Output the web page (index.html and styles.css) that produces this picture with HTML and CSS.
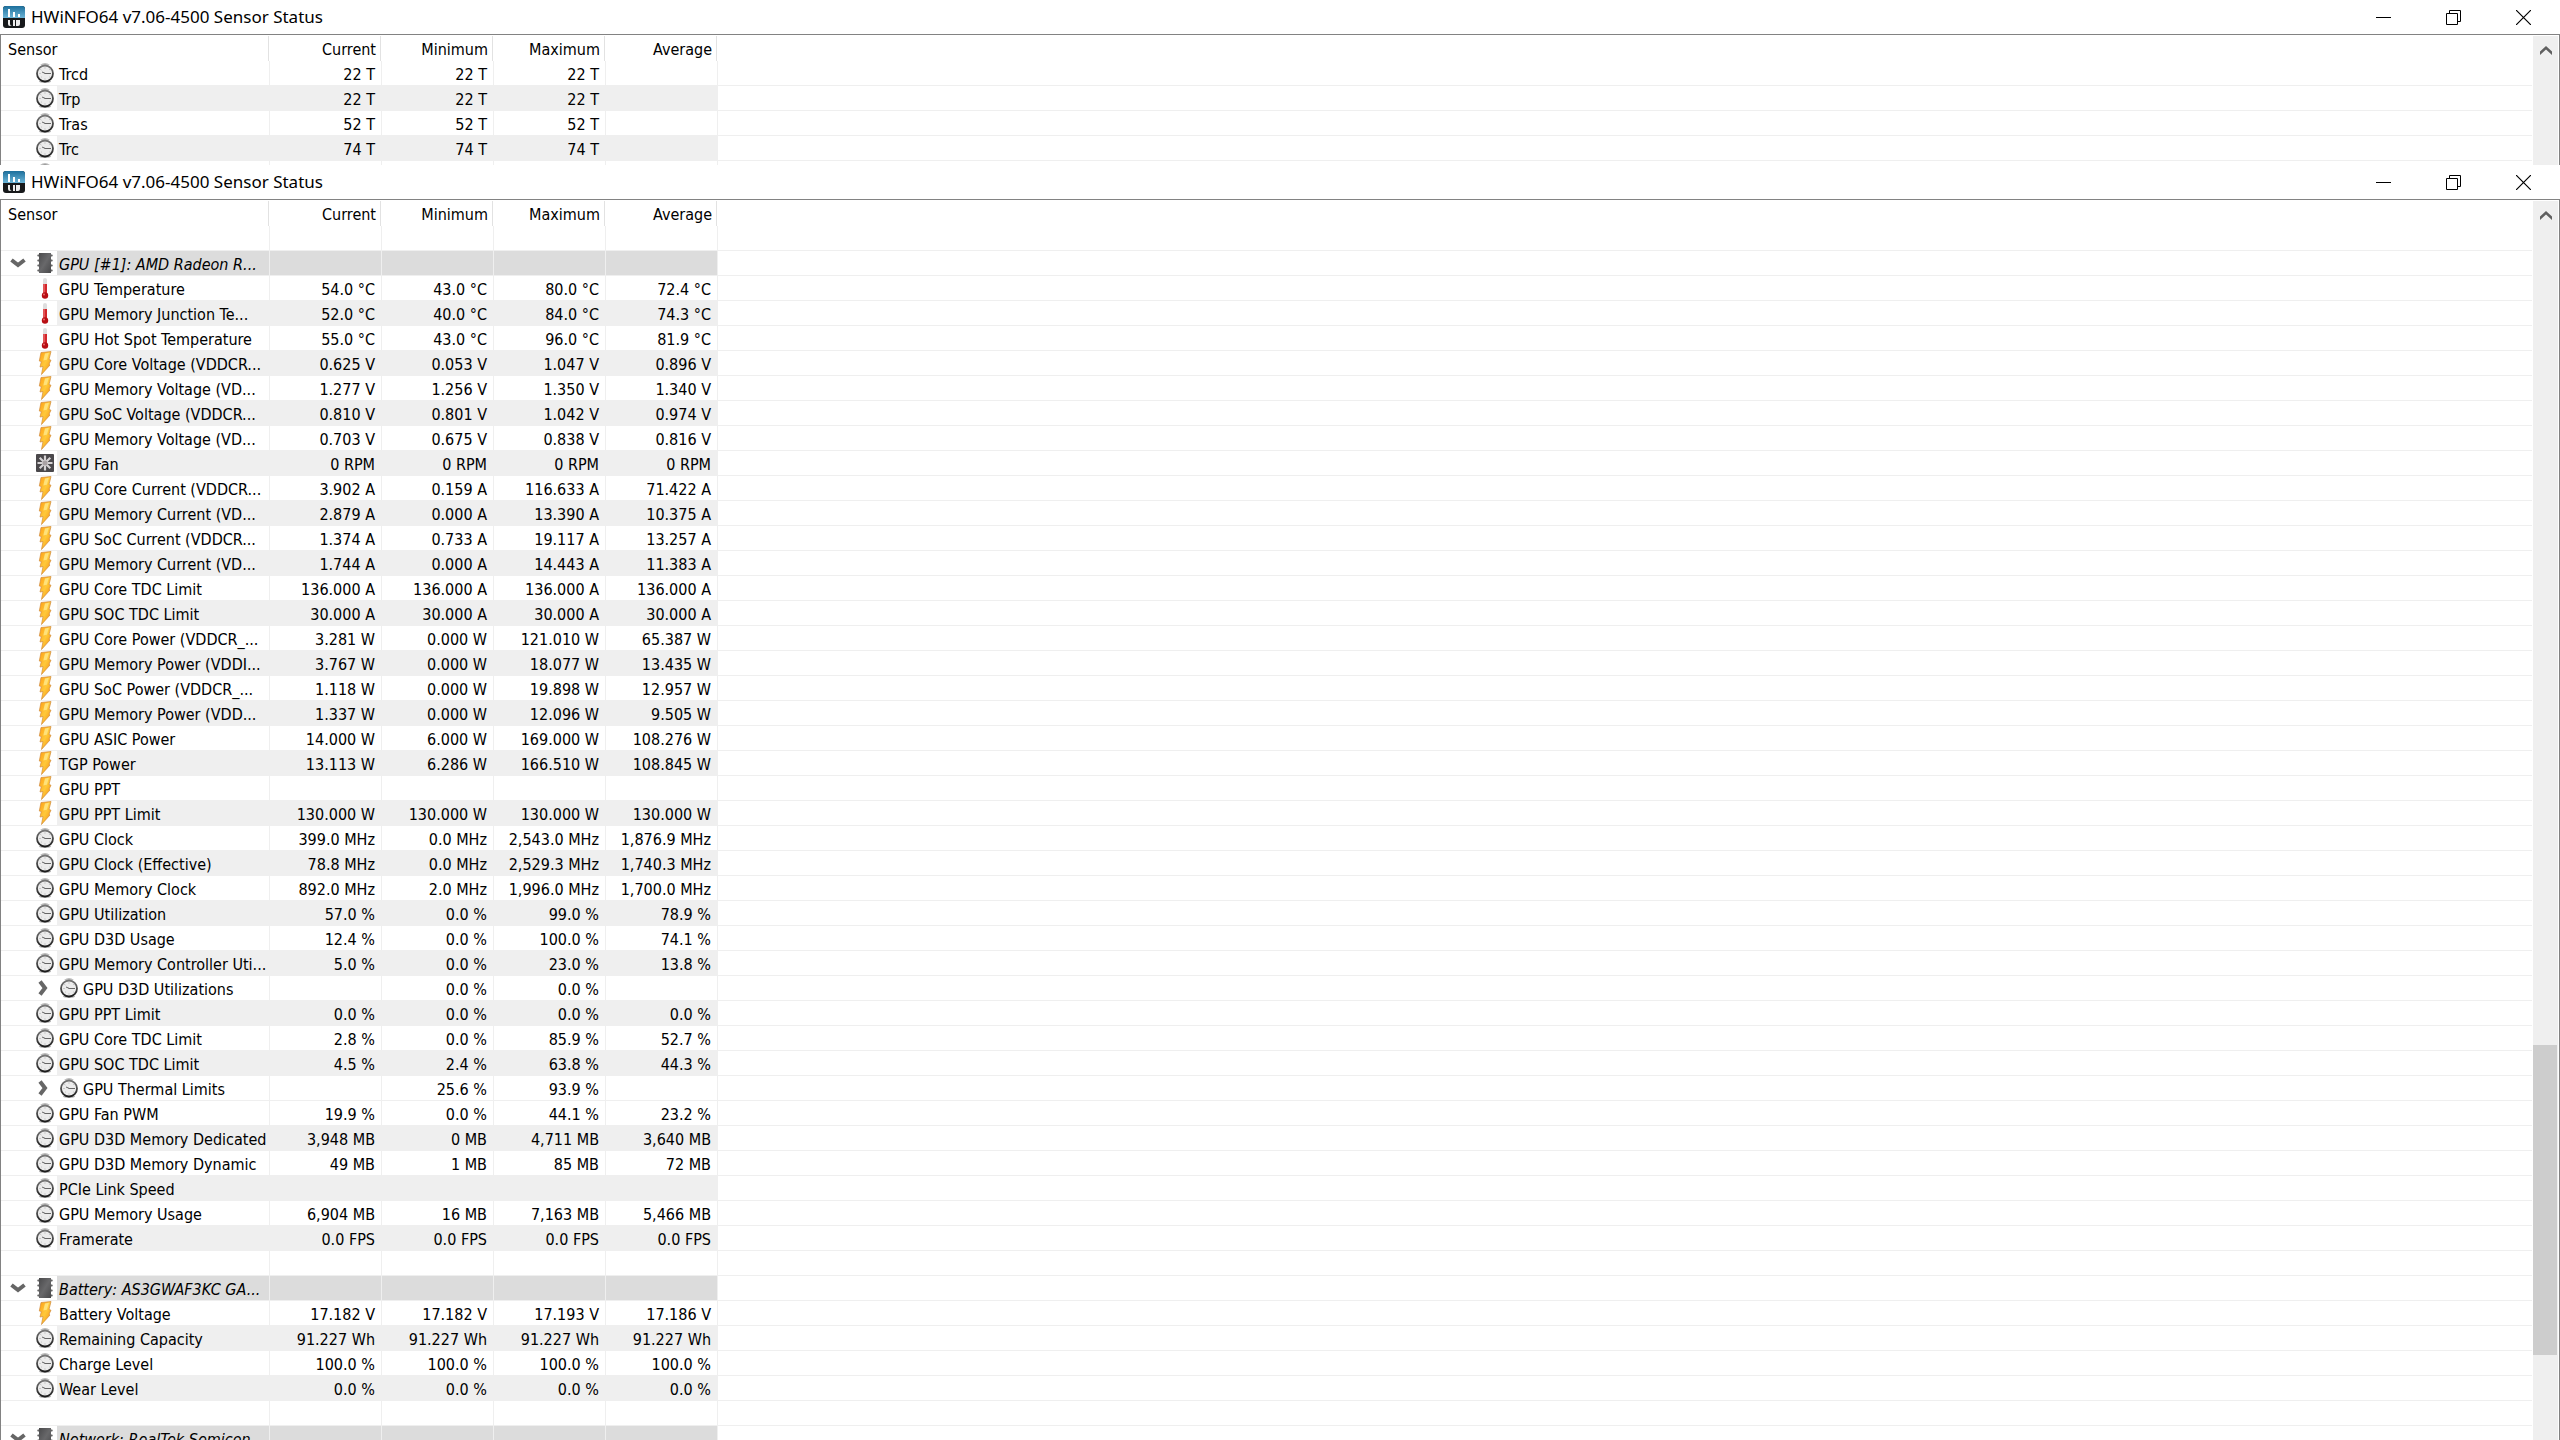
FILE: index.html
```html
<!doctype html>
<html lang="en">
<head>
<meta charset="utf-8">
<title>HWiNFO64 v7.06-4500 Sensor Status</title>
<link rel="stylesheet" href="styles.css">
</head>
<body>
<svg class="defs" aria-hidden="true">
  <defs>
    <linearGradient id="gLogo" x1="0" y1="0" x2="0" y2="1"><stop offset="0" stop-color="#1c6f9c"/><stop offset="1" stop-color="#6cb4d6"/></linearGradient>
    <linearGradient id="gBolt" x1="0" y1="0" x2="1" y2="1"><stop offset="0" stop-color="#ff9d14"/><stop offset=".5" stop-color="#ffc93a"/><stop offset="1" stop-color="#f58a08"/></linearGradient>
    <linearGradient id="gRim" x1="0" y1="0" x2="0" y2="1"><stop offset="0" stop-color="#777"/><stop offset="1" stop-color="#1c1c1c"/></linearGradient>
    <linearGradient id="gChip" x1="0" y1="0" x2="1" y2="1"><stop offset="0" stop-color="#4a4a4c"/><stop offset=".5" stop-color="#68686a"/><stop offset="1" stop-color="#48484a"/></linearGradient>
  </defs>
  <symbol id="logo" viewBox="0 0 22 22">
    <rect width="22" height="22" rx="3" fill="#17191b"/>
    <path d="M3 0h16a3 3 0 0 1 3 3v9H0V3a3 3 0 0 1 3-3z" fill="url(#gLogo)"/>
    <path d="M5 3h2v8H5zM10 6h2v5h-2zM15 8h2v3h-2z" fill="#fff"/>
    <path d="M5 14h2v4q0 2 2 2h1v-6h2v6h-5q-2 0-2-2zM15 14h2v4q0 2-2 2h-2v-6z" fill="#eee"/>
  </symbol>
  <symbol id="clock" viewBox="0 0 18 24">
    <path d="M4 4q5-4 10 0z" fill="#bbb"/>
    <ellipse cx="9" cy="20.500" rx="6" ry="1.500" fill="#aaa"/>
    <circle cx="9" cy="12.500" r="8" fill="#ececec" stroke="url(#gRim)" stroke-width="1.800"/>
    <path d="M9 6.500v1M9 17.500v1M3.500 12.500h1M13.500 16l.7.600M4.500 8.500l.8.500M13.500 8.500l.8-.5M5 16.500l.6-.5" stroke="#aaa" fill="none"/>
    <path d="M6 11l3.500 1.500M8.500 12.500h6.500" stroke="#666" fill="none"/>
  </symbol>
  <symbol id="temp" viewBox="0 0 18 24">
    <rect x="7" y="2" width="4" height="18" rx="2" fill="#dedede"/>
    <path d="M7 8h4v10H7z" fill="#d3262a"/>
    <path d="M7.500 8h1v10h-1z" fill="#ef8585"/>
    <circle cx="9" cy="19.500" r="3.200" fill="#b80f14"/>
    <circle cx="8" cy="18.500" r="1" fill="#e96a6a"/>
  </symbol>
  <symbol id="bolt" viewBox="0 0 18 24">
    <path d="M5 1.500L15 .5l-2 8 2 .7-2 4 1 .8L5.500 23.500l1.500-8-3 .5 1.300-5.500-2-.5z" fill="url(#gBolt)" stroke="#d08a3c" stroke-width=".7"/>
    <path d="M9 2.500l4-.8-2.200 7-3.500.8z" fill="#ffe27a"/>
  </symbol>
  <symbol id="chip" viewBox="0 0 18 24">
    <path d="M1 4.500h16M1 9.500h16M1 14.500h16M1 19.500h16" stroke="#999" stroke-width="1.500"/>
    <rect x="2" y="2" width="14" height="20" fill="#fff"/>
    <path d="M2 4.500h14M2 9.500h14M2 14.500h14M2 19.500h14" stroke="#666" stroke-width="2"/>
    <rect x="3" y="2" width="12" height="20" fill="url(#gChip)"/>
  </symbol>
  <symbol id="fan" viewBox="0 0 18 24">
    <rect y="3" width="18" height="18" rx="1" fill="#4a484b"/>
    <path d="M9 4.500v15M1.500 12h15M3.700 6.700l10.600 10.600M14.300 6.700L3.700 17.300" stroke="#d6d3d5" stroke-width="2.200"/>
    <circle cx="9" cy="12" r="2.500" fill="#a9a2a4"/>
  </symbol>
  <symbol id="down" viewBox="0 0 16 10"><path d="M1.500 2L8 7l6.500-5" fill="none" stroke="#666" stroke-width="4"/></symbol>
  <symbol id="right" viewBox="0 0 10 16"><path d="M2 1.500L7 8l-5 6.500" fill="none" stroke="#666" stroke-width="4"/></symbol>
  <symbol id="up" viewBox="0 0 12 9"><path d="M0 5.500L6 0l6 5.500V9L6 3.500 0 9z" fill="#606060"/></symbol>
  <symbol id="min" viewBox="0 0 15 15"><path d="M0 7.500h15" stroke="#000"/></symbol>
  <symbol id="restore" viewBox="0 0 15 15"><path d="M.5 3.500h11v11H.5zM3.500 3.500v-3h11v11h-3" fill="none" stroke="#000"/></symbol>
  <symbol id="close" viewBox="0 0 15 15"><path d="M0 0l15 15M15 0L0 15" stroke="#000" stroke-width="1.200"/></symbol>
</svg>

<section class="window back">
  <header class="titlebar">
    <svg class="logo"><use href="#logo"/></svg>
    <h1>HWiNFO64 v7.06-4500 Sensor Status</h1>
    <button aria-label="Minimize"><svg><use href="#min"/></svg></button>
    <button aria-label="Restore"><svg><use href="#restore"/></svg></button>
    <button aria-label="Close"><svg><use href="#close"/></svg></button>
  </header>
  <div class="client">
    <div class="list"><table id="timings"></table></div>
    <div class="scrollbar">
      <button aria-label="Scroll up"><svg><use href="#up"/></svg></button>
    </div>
  </div>
</section>

<section class="window front">
  <header class="titlebar">
    <svg class="logo"><use href="#logo"/></svg>
    <h1>HWiNFO64 v7.06-4500 Sensor Status</h1>
    <button aria-label="Minimize"><svg><use href="#min"/></svg></button>
    <button aria-label="Restore"><svg><use href="#restore"/></svg></button>
    <button aria-label="Close"><svg><use href="#close"/></svg></button>
  </header>
  <div class="client">
    <div class="list"><table id="sensors"></table></div>
    <div class="scrollbar">
      <button aria-label="Scroll up"><svg><use href="#up"/></svg></button>
      <div class="before"></div>
      <div class="thumb"></div>
      <div class="after"></div>
    </div>
  </div>
</section>
<script src="script.js"></script>
</body>
</html>
```
FILE: styles.css
```css
* {box-sizing: border-box;}
body {
	margin: 0;
	height: 100vh;
	overflow: hidden;
	display: flex;
	flex-direction: column;
	background: #fff;
	color: #000;
	font-family: Tahoma, "DejaVu Sans Condensed", "DejaVu Sans", sans-serif;
	font-size: 16px;
}
.defs {
	position: absolute;
	width: 0;
	height: 0;
}
button {
	padding: 0;
	border: 0;
	background: none;
}
/* ---------- window ---------- */
.window {
	display: flex;
	flex-direction: column;
	overflow: hidden;
	background: #fff;
}
.back {flex: 0 0 165px;}
.front {flex: 1;}
.titlebar {
	display: flex;
	flex: none;
	align-items: center;
	height: 34px;
	padding: 0 2px 0 3px;
}
.titlebar h1 {
	flex: 1;
	margin: 0 0 0 6px;
	font: 17px/34px "Segoe UI", "Noto Sans", "Open Sans", sans-serif;
}
.titlebar button {
	width: 70px;
	height: 33px;
	display: flex;
	align-items: center;
	justify-content: center;
}
.titlebar button svg {
	width: 15px;
	height: 15px;
}
.logo {
	width: 22px;
	height: 22px;
}
.client {
	flex: 1;
	display: flex;
	min-height: 0;
	border: 1px solid #828282;
	border-bottom: 0;
}
.list {
	flex: 1;
	overflow: hidden;
}
/* ---------- scrollbar ---------- */
.scrollbar {
	display: flex;
	flex-direction: column;
	width: 25px;
	margin: 1px 1px 0;
	background: #efefef;
}
.scrollbar button {
	flex: none;
	height: 28px;
}
.scrollbar button svg {
	display: block;
	width: 12px;
	height: 9px;
	margin: 0 auto;
}
.before {flex: 816;}
.thumb {
	flex: 310;
	margin-right: 1px;
	background: #cdcdcd;
}
.after {flex: 85;}
/* ---------- sensor table ---------- */
table {
	width: 100%;
	table-layout: fixed;
	border-spacing: 0;
}
.tree {width: 56px;}
.name {width: 213px;}
.value {width: 112px;}
th, td {
	height: 25px;
	padding: 3px 6px 0 0;
	line-height: 21px;
	text-align: right;
	white-space: nowrap;
	font-weight: normal;
}
th {
	height: 26px;
	background: linear-gradient(#e2e2e2, #e2e2e2) right 1px top 1px / 1px 25px no-repeat;
}
th:first-child {
	padding-left: 7px;
	text-align: left;
}
th:last-child {background: none;}
td {
	border-right: 1px solid #efefef;
	border-bottom: 1px solid #efefef;
}
td:last-child {border-right: 0;}
td:nth-child(2) {
	padding: 0 0 0 2px;
	text-align: left;
}
td:first-child {
	padding: 0;
	border-right: 0;
}
.odd td:not(:first-child):not(:last-child) {background: #efefef;}
.section td:not(:first-child):not(:last-child) {background: #dcdcdc;}
.section td {font-style: italic;}
.cell {
	display: flex;
	align-items: center;
	height: 24px;
}
.cell span {padding-top: 3px;}
td:first-child .cell {
	justify-content: flex-end;
	padding-right: 3px;
}
.icon {
	flex: none;
	width: 18px;
	height: 24px;
}
.down {
	width: 16px;
	height: 10px;
	margin-right: 10px;
}
.right {
	width: 10px;
	height: 16px;
	margin-right: 6px;
}
.sub .icon {margin: 0 5px 0 1px;}
```
FILE: script.js
```javascript
// rows: [icon, name, current, minimum, maximum, average], [] is a spacer
var timings = [
	["clock", "Trcd", "22 T", "22 T", "22 T", ""],
	["clock", "Trp", "22 T", "22 T", "22 T", ""],
	["clock", "Tras", "52 T", "52 T", "52 T", ""],
	["clock", "Trc", "74 T", "74 T", "74 T", ""],
	["clock", "", "", "", "", ""]
];
// a collapsed "sub" row ends with the number of its children
var sensors = [
	[],
	["chip", "GPU [#1]: AMD Radeon R..."],
	["temp", "GPU Temperature", "54.0 °C", "43.0 °C", "80.0 °C", "72.4 °C"],
	["temp", "GPU Memory Junction Te...", "52.0 °C", "40.0 °C", "84.0 °C", "74.3 °C"],
	["temp", "GPU Hot Spot Temperature", "55.0 °C", "43.0 °C", "96.0 °C", "81.9 °C"],
	["bolt", "GPU Core Voltage (VDDCR...", "0.625 V", "0.053 V", "1.047 V", "0.896 V"],
	["bolt", "GPU Memory Voltage (VD...", "1.277 V", "1.256 V", "1.350 V", "1.340 V"],
	["bolt", "GPU SoC Voltage (VDDCR...", "0.810 V", "0.801 V", "1.042 V", "0.974 V"],
	["bolt", "GPU Memory Voltage (VD...", "0.703 V", "0.675 V", "0.838 V", "0.816 V"],
	["fan", "GPU Fan", "0 RPM", "0 RPM", "0 RPM", "0 RPM"],
	["bolt", "GPU Core Current (VDDCR...", "3.902 A", "0.159 A", "116.633 A", "71.422 A"],
	["bolt", "GPU Memory Current (VD...", "2.879 A", "0.000 A", "13.390 A", "10.375 A"],
	["bolt", "GPU SoC Current (VDDCR...", "1.374 A", "0.733 A", "19.117 A", "13.257 A"],
	["bolt", "GPU Memory Current (VD...", "1.744 A", "0.000 A", "14.443 A", "11.383 A"],
	["bolt", "GPU Core TDC Limit", "136.000 A", "136.000 A", "136.000 A", "136.000 A"],
	["bolt", "GPU SOC TDC Limit", "30.000 A", "30.000 A", "30.000 A", "30.000 A"],
	["bolt", "GPU Core Power (VDDCR_...", "3.281 W", "0.000 W", "121.010 W", "65.387 W"],
	["bolt", "GPU Memory Power (VDDI...", "3.767 W", "0.000 W", "18.077 W", "13.435 W"],
	["bolt", "GPU SoC Power (VDDCR_...", "1.118 W", "0.000 W", "19.898 W", "12.957 W"],
	["bolt", "GPU Memory Power (VDD...", "1.337 W", "0.000 W", "12.096 W", "9.505 W"],
	["bolt", "GPU ASIC Power", "14.000 W", "6.000 W", "169.000 W", "108.276 W"],
	["bolt", "TGP Power", "13.113 W", "6.286 W", "166.510 W", "108.845 W"],
	["bolt", "GPU PPT", "", "", "", ""],
	["bolt", "GPU PPT Limit", "130.000 W", "130.000 W", "130.000 W", "130.000 W"],
	["clock", "GPU Clock", "399.0 MHz", "0.0 MHz", "2,543.0 MHz", "1,876.9 MHz"],
	["clock", "GPU Clock (Effective)", "78.8 MHz", "0.0 MHz", "2,529.3 MHz", "1,740.3 MHz"],
	["clock", "GPU Memory Clock", "892.0 MHz", "2.0 MHz", "1,996.0 MHz", "1,700.0 MHz"],
	["clock", "GPU Utilization", "57.0 %", "0.0 %", "99.0 %", "78.9 %"],
	["clock", "GPU D3D Usage", "12.4 %", "0.0 %", "100.0 %", "74.1 %"],
	["clock", "GPU Memory Controller Uti...", "5.0 %", "0.0 %", "23.0 %", "13.8 %"],
	["sub", "GPU D3D Utilizations", "", "0.0 %", "0.0 %", "", 2],
	["clock", "GPU PPT Limit", "0.0 %", "0.0 %", "0.0 %", "0.0 %"],
	["clock", "GPU Core TDC Limit", "2.8 %", "0.0 %", "85.9 %", "52.7 %"],
	["clock", "GPU SOC TDC Limit", "4.5 %", "2.4 %", "63.8 %", "44.3 %"],
	["sub", "GPU Thermal Limits", "", "25.6 %", "93.9 %", "", 3],
	["clock", "GPU Fan PWM", "19.9 %", "0.0 %", "44.1 %", "23.2 %"],
	["clock", "GPU D3D Memory Dedicated", "3,948 MB", "0 MB", "4,711 MB", "3,640 MB"],
	["clock", "GPU D3D Memory Dynamic", "49 MB", "1 MB", "85 MB", "72 MB"],
	["clock", "PCIe Link Speed", "", "", "", ""],
	["clock", "GPU Memory Usage", "6,904 MB", "16 MB", "7,163 MB", "5,466 MB"],
	["clock", "Framerate", "0.0 FPS", "0.0 FPS", "0.0 FPS", "0.0 FPS"],
	[],
	["chip", "Battery: AS3GWAF3KC GA..."],
	["bolt", "Battery Voltage", "17.182 V", "17.182 V", "17.193 V", "17.186 V"],
	["clock", "Remaining Capacity", "91.227 Wh", "91.227 Wh", "91.227 Wh", "91.227 Wh"],
	["clock", "Charge Level", "100.0 %", "100.0 %", "100.0 %", "100.0 %"],
	["clock", "Wear Level", "0.0 %", "0.0 %", "0.0 %", "0.0 %"],
	[],
	["chip", "Network: RealTek Semicon..."]
];

function icon(id, cls)
{
	return '<svg class="' + cls + '"><use href="#' + id + '"/></svg>';
}

function fill(id, rows)
{
	var html = '<colgroup><col class="tree"><col class="name"><col class="value"><col class="value"><col class="value"><col class="value"><col></colgroup>'
		+ '<thead><tr><th colspan="2">Sensor</th><th>Current</th><th>Minimum</th><th>Maximum</th><th>Average</th><th></th></tr></thead><tbody>';
	var n = 0;
	rows.forEach(function (row) {
		var kind = row[0];
		var cls = "";
		var tree = "";
		var name = '<span>' + (row[1] || "") + '</span>';
		if (kind == "chip")
		{
			cls = "section";
			tree = icon("down", "down") + icon("chip", "icon");
			n = 0;
		}
		else if (kind == "sub")
		{
			cls = "sub";
			tree = icon("right", "right");
			name = icon("clock", "icon") + name;
			n += 1 + row[6];
		}
		else if (kind)
		{
			cls = n % 2 ? "odd" : "";
			tree = icon(kind, "icon");
			n++;
		}
		html += '<tr class="' + cls + '"><td><div class="cell">' + tree + '</div></td><td><div class="cell">' + name + '</div></td>';
		for (var c = 2; c < 6; c++) html += '<td>' + (row[c] || "") + '</td>';
		html += '<td></td></tr>';
	});
	document.getElementById(id).innerHTML = html + '</tbody>';
}

fill("timings", timings);
fill("sensors", sensors);
```
